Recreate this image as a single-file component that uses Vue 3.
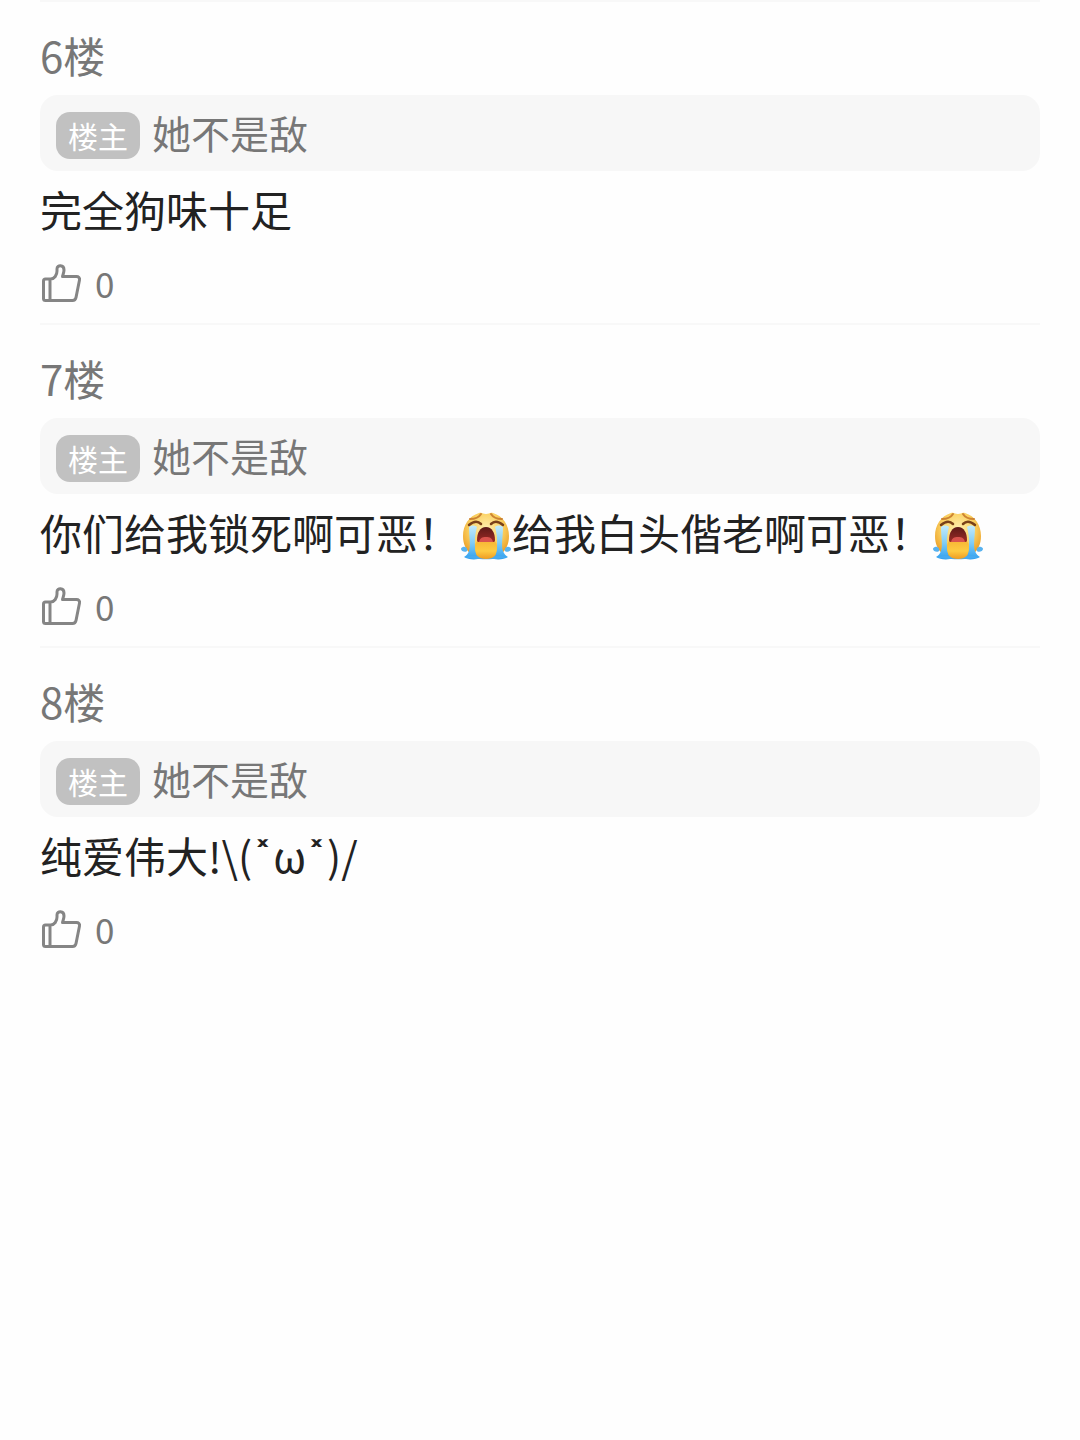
<script setup>
import { ref } from 'vue'

const comments = ref([
  { floor: 6, parts: ['完全狗味十足'], likes: 0 },
  {
    floor: 7,
    parts: ['你们给我锁死啊可恶！', { emoji: '大哭' }, '给我白头偕老啊可恶！', { emoji: '大哭' }],
    likes: 0,
  },
  { floor: 8, parts: ['纯爱伟大!\\(', { mark: '˟' }, 'ω', { mark: '˟' }, ')/'], likes: 0 },
])
</script>

<template>
  <main class="page">
    <svg class="defs" aria-hidden="true">
      <defs>
        <radialGradient id="face" cx="0.5" cy="0.35" r="0.65">
          <stop offset="0" stop-color="#ffeeb0" />
          <stop offset="0.55" stop-color="#fbd263" />
          <stop offset="1" stop-color="#e9981f" />
        </radialGradient>
        <linearGradient id="tear" x1="0" y1="0" x2="0" y2="1">
          <stop offset="0" stop-color="#c4ebfb" />
          <stop offset="0.5" stop-color="#82cdf6" />
          <stop offset="1" stop-color="#2e9ff0" />
        </linearGradient>
        <linearGradient id="chin" x1="0" y1="0" x2="0" y2="1">
          <stop offset="0" stop-color="#f6b233" />
          <stop offset="0.6" stop-color="#fdcb42" />
          <stop offset="1" stop-color="#ee9c22" />
        </linearGradient>
        <linearGradient id="mouth" x1="0" y1="0" x2="0" y2="1">
          <stop offset="0" stop-color="#5c1a17" />
          <stop offset="1" stop-color="#9c2a26" />
        </linearGradient>
      </defs>
    </svg>

    <article v-for="comment in comments" :key="comment.floor" class="comment">
      <h2 class="floor">{{ comment.floor }}楼</h2>
      <div class="author">
        <span class="badge">楼主</span>
        <span class="name">她不是敌</span>
      </div>
      <p class="text">
        <template v-for="(part, i) in comment.parts" :key="i"><svg
          v-if="part.emoji"
          class="emoji"
          viewBox="0 0 52 52"
          role="img"
          :aria-label="part.emoji"
        >
          <path d="M19 3c3-1 4 1 7 1s4-2 7-1c10 3 16 12 16 23 0 8-3 14-8 18-4 3-8 5-15 5s-11-2-15-5C6 40 3 34 3 26 3 15 9 6 19 3Z" fill="url(#face)" />
          <path d="M9 17c2-2 6-2 8 0-3 10-3 23 1 32-5 1-11 0-14-2 2-1 4-3 5-6 2-6 0-14 0-24Z" fill="url(#tear)" />
          <path d="M43 17c-2-2-6-2-8 0 3 10 3 23-1 32 5 1 11 0 14-2-2-1-4-3-5-6-2-6 0-14 0-24Z" fill="url(#tear)" />
          <path d="M3 37c3-1 5 2 4 4-2 2-6 0-6-2 0-1 1-2 2-2ZM49 37c-3-1-5 2-4 4 2 2 6 0 6-2 0-1-1-2-2-2Z" fill="#58b2ef" />
          <path d="M5 47c9-2 33-2 42 0-7 3-35 3-42 0Z" fill="#47aaf0" />
          <path d="M15 37c0-6 4-8 11-8s11 2 11 8c0 8-3 12-11 12s-11-4-11-12Z" fill="url(#chin)" />
          <path d="M26 17c6 0 9 6 9 13 0 2-1 2-3 2H20c-2 0-3 0-3-2 0-7 3-13 9-13Z" fill="url(#mouth)" />
          <path d="M19 32c1-4 3-5 7-5s6 1 7 5H19Z" fill="#d9534d" />
          <path d="M9 15q7-6 12-1M31 14q5-5 12 1" fill="none" stroke="#7a4119" stroke-width="2.500" stroke-linecap="round" />
          <path d="M10 9q8 0 11-5M42 9q-8 0-11-5" fill="none" stroke="#cd8432" stroke-width="2" stroke-linecap="round" />
        </svg><span v-else-if="part.mark" class="mark">{{ part.mark }}</span><template v-else>{{ part }}</template></template>
      </p>
      <button type="button" class="like" aria-label="点赞" @click="comment.likes++">
        <svg class="thumb" viewBox="0 0 42 40" aria-hidden="true">
          <path d="M5.500 16h5c4 0 6.500-4 6.500-8V6c0-4.500 7-4.500 7 1 0 2.500-1 4.500-1.500 6.500h14c2 0 3.500 1.500 3 3.500l-3.500 17.500c-.4 2-1.500 3-3.500 3h-27c-1.300 0-2-.7-2-2V18c0-1.300.7-2 2-2ZM10 16v22" />
        </svg>
        <span>{{ comment.likes }}</span>
      </button>
    </article>
  </main>
</template>

<style>
body {
  margin: 0;
  background: #fefefe;
}
</style>

<style scoped>
.page {
  padding: 0 40px;
  color: #222;
  font-family: "Noto Sans CJK SC", "Noto Sans", sans-serif;
}

.defs {
  position: absolute;
  width: 0;
  height: 0;
}

.comment {
  padding: 23px 0 20px;
  border-top: 2px solid #f8f8f8;
}

.floor {
  margin: 0 0 10px;
  color: #777;
  font-size: 42px;
  font-weight: 400;
  line-height: 60px;
}

.author {
  display: flex;
  align-items: center;
  gap: 12px;
  padding: 0 16px;
  min-height: 76px;
  border-radius: 18px;
  background: #f7f7f7;
}

.badge {
  padding: 0 12px;
  border-radius: 14px;
  background: #c1c1c1;
  color: #fff;
  font-size: 30px;
  line-height: 47px;
  margin-top: 4px;
}

.name {
  color: #777;
  font-size: 39px;
  line-height: 60px;
  margin-bottom: 2px;
}

.text {
  margin: 8px 0 24px;
  font-size: 42px;
  line-height: 60px;
}

.mark {
  font-family: "DejaVu Sans", sans-serif;
  line-height: 1;
}

.emoji {
  width: 52px;
  height: 52px;
  margin: -8px 0 0;
  vertical-align: -12px;
}

.like {
  display: flex;
  align-items: center;
  gap: 13px;
  padding: 0;
  border: 0;
  background: none;
  color: #777;
  font-family: inherit;
  font-size: 35px;
  line-height: 40px;
  cursor: pointer;
}

.thumb {
  width: 42px;
  height: 40px;
  fill: none;
  stroke: #858585;
  stroke-width: 3;
  stroke-linejoin: round;
}
</style>
